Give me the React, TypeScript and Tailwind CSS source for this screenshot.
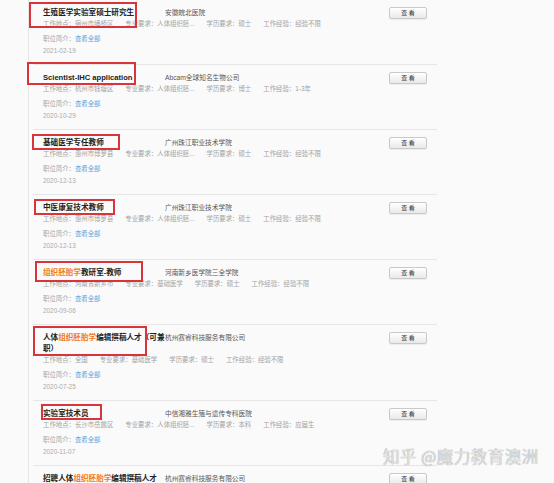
import React from 'react'

type Seg = { t: string; hl?: boolean }

interface Job {
  title: Seg[]
  company: string
  place: string
  major: string
  edu: string
  exp: string
  date?: string
  box?: { left: number; top: number; w: number; h: number }
}

const JOBS: Job[] = [
  {
    title: [{ t: '生殖医学实验室硕士研究生' }],
    company: '安徽皖北医院',
    place: '宿州市埇桥区', major: '人体组织胚...', edu: '硕士', exp: '经验不限',
    date: '2021-02-19',
    box: { left: -4, top: 2, w: 108, h: 26 },
  },
  {
    title: [{ t: 'Scientist-IHC application' }],
    company: 'Abcam全球知名生物公司',
    place: '杭州市钱塘区', major: '人体组织胚...', edu: '博士', exp: '1-3年',
    date: '2020-10-29',
    box: { left: -6, top: -3, w: 109, h: 23 },
  },
  {
    title: [{ t: '基础医学专任教师' }],
    company: '广州珠江职业技术学院',
    place: '惠州市博罗县', major: '人体组织胚...', edu: '硕士', exp: '经验不限',
    date: '2020-12-13',
    box: { left: -1, top: 4, w: 88, h: 16 },
  },
  {
    title: [{ t: '中医康复技术教师' }],
    company: '广州珠江职业技术学院',
    place: '惠州市博罗县', major: '人体组织胚...', edu: '硕士', exp: '经验不限',
    date: '2020-12-13',
    box: { left: 1, top: 4, w: 81, h: 16 },
  },
  {
    title: [{ t: '组织胚胎学', hl: true }, { t: '教研室-教师' }],
    company: '河南新乡医学院三全学院',
    place: '河南省新乡市', major: '基础医学', edu: '硕士', exp: '经验不限',
    date: '2020-09-06',
    box: { left: 2, top: 1, w: 108, h: 21 },
  },
  {
    title: [{ t: '人体' }, { t: '组织胚胎学', hl: true }, { t: '编辑撰稿人才（可兼职）' }],
    company: '杭州赛睿科技服务有限公司',
    place: '全国', major: '基础医学', edu: '硕士', exp: '经验不限',
    date: '2020-07-25',
    box: { left: 0, top: 1, w: 114, h: 30 },
  },
  {
    title: [{ t: '实验室技术员' }],
    company: '中信湘雅生殖与遗传专科医院',
    place: '长沙市岳麓区', major: '人体组织胚...', edu: '本科', exp: '应届生',
    date: '2020-11-07',
    box: { left: 8, top: 3, w: 61, h: 16 },
  },
  {
    title: [{ t: '招聘人体' }, { t: '组织胚胎学', hl: true }, { t: '编辑撰稿人才' }],
    company: '杭州赛睿科技服务有限公司',
    place: '全国', major: '基础医学', edu: '硕士', exp: '经验不限',
    date: '2020-07-25',
  },
]

function JobRow({ job }: { job: Job }) {
  return (
    <div className="relative flex border-b border-[#e6e6e6] pt-[7px] pb-[7px]">
      <div className="flex-1 pl-[10px]">
        <div className="flex items-start">
          <div className="w-[122px] text-[7.6px] font-bold leading-[11px] text-[#222]">
            {job.title.map((s, i) => (
              <span key={i} className={s.hl ? 'text-[#f07a1e]' : ''}>{s.t}</span>
            ))}
          </div>
          <div className="text-[6.7px] leading-[11px] text-[#555]">{job.company}</div>
        </div>
        <div className="text-[6.4px] leading-[12px] text-[#a3a3a3]">
          <span className="mr-[12px]">工作地点：{job.place}</span>
          <span className="mr-[12px]">专业要求：{job.major}</span>
          <span className="mr-[12px]">学历要求：{job.edu}</span>
          <span>工作经验：{job.exp}</span>
        </div>
        <div className="mt-[3px] text-[6.4px] leading-[12px] text-[#a6a6a6]">
          职位简介：<span className="text-[#5aa2da]">查看全部</span>
        </div>
        <div className="text-[6.4px] leading-[12px] text-[#ababab]">{job.date}</div>
      </div>
      <button className="mr-[10px] flex h-[12px] w-[38px] items-center justify-center rounded-[2px] border border-[#c9c9c9] bg-gradient-to-b from-white to-[#e9e9e9] text-[6px] leading-none text-[#333] shadow-[0_1px_1px_rgba(0,0,0,0.06)]">
        查 看
      </button>
      {job.box && (
        <div
          className="pointer-events-none absolute border-2 border-[#d8343a]"
          style={{ left: job.box.left, top: job.box.top, width: job.box.w, height: job.box.h }}
        />
      )}
    </div>
  )
}

export default function App() {
  return (
    <div className="relative h-[483px] w-[554px] overflow-hidden bg-[#fafafa] font-['Liberation_Sans','Noto_Sans_CJK_SC',sans-serif]">
      <div className="ml-[28px] min-h-full w-[409px] border-l border-[#e6e6e6] pl-[4px]">
        {JOBS.map((job, i) => (
          <JobRow key={i} job={job} />
        ))}
      </div>
      <div className="pointer-events-none absolute left-[383px] top-[448px] font-['Noto_Sans_CJK_SC',sans-serif] text-[16.5px] font-light leading-none tracking-[0.5px] text-[#ececec] [text-shadow:0_0_1px_#9a9a9a,0_0_1px_#9a9a9a]">
        知乎 @魔力教育澳洲
      </div>
    </div>
  )
}
